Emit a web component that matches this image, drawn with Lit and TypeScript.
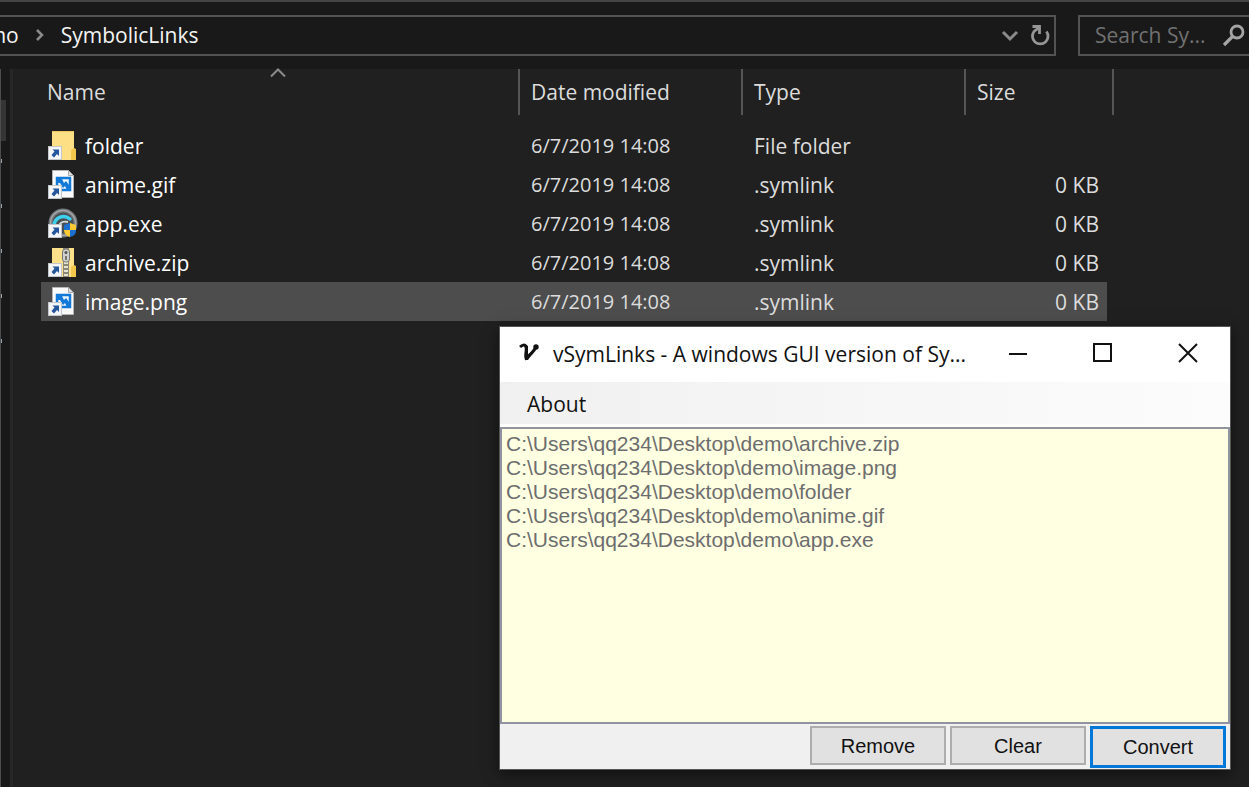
import { LitElement, html, css, svg } from "lit";
import { customElement, property } from "lit/decorators.js";

type Kind = "folder" | "image" | "app" | "zip";

interface Entry {
  name: string;
  kind: Kind;
  date: string;
  type: string;
  size: string;
  selected?: boolean;
}

const ENTRIES: Entry[] = [
  { name: "folder", kind: "folder", date: "6/7/2019 14:08", type: "File folder", size: "" },
  { name: "anime.gif", kind: "image", date: "6/7/2019 14:08", type: ".symlink", size: "0 KB" },
  { name: "app.exe", kind: "app", date: "6/7/2019 14:08", type: ".symlink", size: "0 KB" },
  { name: "archive.zip", kind: "zip", date: "6/7/2019 14:08", type: ".symlink", size: "0 KB" },
  { name: "image.png", kind: "image", date: "6/7/2019 14:08", type: ".symlink", size: "0 KB", selected: true },
];

const PATHS = ["archive.zip", "image.png", "folder", "anime.gif", "app.exe"].map(
  (name) => `C:\\Users\\qq234\\Desktop\\demo\\${name}`,
);

const ART = {
  folder: svg`
    <path d="M4 1h22v29H4z" fill="#fddf85" />
    <path d="M4 1h22v1H4z" fill="#e9c565" />
    <path d="M23 20l3-2 2 1v11h-5z" fill="#f3c74c" />`,
  zip: svg`
    <path d="M4 1h22v29H4z" fill="#fce08a" />
    <path d="M23 20l3-2 2 1v11h-5z" fill="#f3c74c" />
    <rect x="15" y="1" width="6" height="29" fill="#8b8878" />
    <path d="M18 15v15" stroke="#e8e4d2" stroke-width="4" stroke-dasharray="2 2" />
    <rect x="14.500" y="2" width="7" height="13" rx="3" fill="#d0d0d0" stroke="#77776f" />
    <circle cx="18" cy="5.500" r="1.500" fill="#55554f" />
    <path d="M18 9v4" stroke="#77776f" stroke-width="2" />`,
  image: svg`
    <path d="M4.500 1.500h16l5 5v22h-21z" fill="#fafafa" stroke="#b5b5b5" />
    <path d="M20.500 1.500v5h5z" fill="#dedede" stroke="#a9a9a9" />
    <rect x="9" y="9" width="13" height="12" fill="#eef6ff" stroke="#1379d8" stroke-width="2.500" />
    <path d="M10 10h4l2 4 2-2 3 4v5h-2l-2-4-2 2-3-5h-2z" fill="#1379d8" />`,
  app: svg`
    <circle cx="15" cy="15" r="14.500" fill="#73777a" />
    <circle cx="15" cy="15" r="12.500" fill="none" stroke="#a3a6a8" stroke-width="1.500" />
    <circle cx="15" cy="15" r="10.500" fill="#4a4f52" />
    <path d="M6 17C7 9 16 6 22 11" fill="none" stroke="#3fd0ee" stroke-width="3.500" stroke-linecap="round" />
    <path d="M11 18c1-4 5-5 9-4" fill="none" stroke="#d5dcde" stroke-width="2" />
    <path d="M16 17l6-2v7h-6z" fill="#1d6fd0" />
    <path d="M22 15l6 2v5h-6z" fill="#fbc934" />
    <path d="M16 22h6v7c-4-1-6-4-6-7z" fill="#fbc934" />
    <path d="M22 22h6c0 4-2 6-6 7z" fill="#1d6fd0" />`,
};

@customElement("file-icon")
export class FileIcon extends LitElement {
  @property() kind: Kind = "folder";

  static styles = css`
    :host { display: block; flex: none; width: 30px; height: 32px; }
    .art { display: block; }
  `;

  render() {
    return html`<svg class="art" width="30" height="32" viewBox="0 0 30 32" aria-hidden="true">
      ${ART[this.kind]}
      <rect x="0.500" y="16.500" width="13" height="13" fill="#f4f5f7" stroke="#c3c6ca" />
      <path d="M4.500 19.500h6.500v6.500l-2-2-3 3.500-2.500-2.500 3-3.500z" fill="#24569c" />
    </svg>`;
  }
}

@customElement("explorer-pane")
export class ExplorerPane extends LitElement {
  static styles = css`
    :host { display: flex; flex-direction: column; color: #dcdcdc; font: 21px/30px "Open Sans", "Noto Sans", sans-serif; }
    .bar { display: flex; gap: 22px; padding-top: 13px; height: 54px; border-top: 2px solid #444; }
    .address, .search { display: flex; align-items: center; box-sizing: border-box; height: 41px; border: 2px solid #535353; padding-bottom: 2px; }
    .address { flex: 1; min-width: 0; overflow: hidden; border-left: 0; }
    .crumb { color: #f4f4f4; text-decoration: none; }
    .parent { margin-left: -38px; }
    .arrow { margin: 0 16px; }
    .grow { flex: 1; }
    .icon { display: block; flex: none; }
    .tool { display: flex; align-items: center; justify-content: center; width: 32px; height: 36px; padding: 0; border: 0; background: none; }
    .tool:last-child { width: 28px; }
    .search { width: 171px; border-right: 0; padding-left: 15px; }
    .query { flex: 1; min-width: 0; padding: 0; border: 0; outline: 0; background: none; color: #eee; font: inherit; }
    .query::placeholder { color: #717171; opacity: 1; }
    .body { display: flex; flex: 1; }
    .nav { display: flex; flex-direction: column; align-items: flex-start; box-sizing: border-box; width: 13px; border-left: 1px solid #4a4c4e; border-right: 3px solid #272727; }
    .thumb { width: 5px; height: 41px; margin-top: 31px; background: #353535; }
    .pins { display: flex; flex-direction: column; gap: 41px; margin-top: 18px; }
    .pin { width: 1px; height: 4px; background: #9ba2a8; }
    .files { flex: 1; background: #202020; padding-left: 28px; }
    .table { table-layout: fixed; width: 1073px; border-collapse: separate; border-spacing: 0; }
    .name-col { width: 479px; }
    .mid-col { width: 223px; }
    .size-col { width: 148px; }
    .head { position: relative; height: 46px; padding: 0 0 0 11px; text-align: left; font-weight: 400; border-right: 2px solid #555; }
    .head:first-child { padding-left: 6px; }
    .sort { position: absolute; top: -1px; left: 229px; }
    .spacer { height: 11px; padding: 0; }
    .cell { height: 39px; padding: 0 0 0 11px; white-space: nowrap; }
    .cell:first-child { padding-left: 7px; }
    .cell:last-child { padding-right: 8px; text-align: right; border-right: 7px solid transparent; background-clip: padding-box; }
    .date { font-size: 20px; }
    .selected .cell { background-color: #4d4d4d; }
    .label { display: flex; align-items: center; gap: 7px; color: #fff; }
  `;

  render() {
    return html`
      <div class="bar">
        <nav class="address" aria-label="Address">
          <a class="crumb parent" href="#demo">demo</a>
          <svg class="icon arrow" width="10" height="14" viewBox="0 0 10 14"><path d="M2 2l5 5-5 5" fill="none" stroke="#8b8b8b" stroke-width="2.500" /></svg>
          <a class="crumb" href="#links">SymbolicLinks</a>
          <span class="grow"></span>
          <button class="tool" aria-label="History">
            <svg class="icon" width="20" height="14" viewBox="0 0 20 14"><path d="M3 4l7 7 7-7" fill="none" stroke="#8b8b8b" stroke-width="3" /></svg>
          </button>
          <button class="tool" aria-label="Refresh">
            <svg class="icon" width="22" height="24" viewBox="0 0 22 24"><path d="M17.500 8.500A7.800 7.800 0 1 1 5 8.500L9.500 5M3.500 3.500h7v7.500" fill="none" stroke="#969696" stroke-width="2.800" /></svg>
          </button>
        </nav>
        <div class="search">
          <input class="query" aria-label="Search" placeholder="Search Sy..." />
          <svg class="icon" width="28" height="24" viewBox="0 0 28 24"><circle cx="16" cy="9" r="6" fill="none" stroke="#a5a5a5" stroke-width="2.800" /><path d="M12 13l-9 9" stroke="#a5a5a5" stroke-width="3.200" /></svg>
        </div>
      </div>
      <div class="body">
        <div class="nav">
          <div class="thumb"></div>
          <div class="pins">${[1, 2, 3, 4, 5].map(() => html`<div class="pin"></div>`)}</div>
        </div>
        <div class="files">
          <table class="table">
            <colgroup>
              <col class="name-col" /><col class="mid-col" /><col class="mid-col" /><col class="size-col" />
            </colgroup>
            <thead>
              <tr>
                <th class="head">Name
                  <svg class="icon sort" width="16" height="10" viewBox="0 0 16 10"><path d="M1 8.500l7-7 7 7" fill="none" stroke="#8b8b8b" stroke-width="2" /></svg>
                </th>
                <th class="head">Date modified</th>
                <th class="head">Type</th>
                <th class="head">Size</th>
              </tr>
            </thead>
            <tbody>
              <tr><td class="spacer" colspan="4"></td></tr>
              ${ENTRIES.map(
                (e) => html`<tr class=${e.selected ? "selected" : ""}>
                  <td class="cell"><div class="label"><file-icon .kind=${e.kind}></file-icon>${e.name}</div></td>
                  <td class="cell date">${e.date}</td>
                  <td class="cell">${e.type}</td>
                  <td class="cell">${e.size}</td>
                </tr>`,
              )}
            </tbody>
          </table>
        </div>
      </div>
    `;
  }
}

@customElement("symlinks-window")
export class SymlinksWindow extends LitElement {
  static styles = css`
    :host { display: flex; flex-direction: column; box-sizing: border-box; border: 1px solid #555; background: #f0f0f0; color: #111; font: 21px/30px "Open Sans", "Noto Sans", sans-serif; box-shadow: 0 4px 14px rgba(0, 0, 0, 0.5); }
    .title { display: flex; align-items: center; box-sizing: border-box; height: 55px; padding-bottom: 2px; background: #fff; }
    .logo { flex: none; margin: 0 13px 3px 19px; }
    .caption { flex: 1; min-width: 0; margin: 0; font: inherit; white-space: nowrap; }
    .control { display: flex; align-items: center; justify-content: center; width: 85px; height: 52px; padding: 0 0 2px; border: 0; background: none; }
    .menu { display: flex; height: 42px; border-bottom: 3px solid #fff; background: linear-gradient(90deg, #f0f0f0, #fcfcfc); }
    .item { padding: 2px 27px 0; border: 0; background: none; color: inherit; font: inherit; }
    .paths { flex: 1; min-height: 0; box-sizing: border-box; width: 100%; margin: 0; padding: 3px 4px; overflow: hidden; border: 2px solid #8f94a0; border-radius: 0; outline: 0; background: #ffffe1; font: 21px/24px "Liberation Sans", Arial, sans-serif; }
    .path { height: 24px; min-height: 24px; padding: 0; line-height: 24px; color: #6d6d6d; }
    .actions { display: flex; justify-content: flex-end; gap: 4px; height: 43px; padding: 2px 4px 0 0; }
    .action { box-sizing: border-box; width: 136px; height: 39px; padding: 0; border: 2px solid #adadad; background: #e1e1e1; color: #111; font: 20px/30px "Liberation Sans", Arial, sans-serif; }
    .primary { height: 42px; border: 3px solid #0078d7; }
  `;

  render() {
    return html`
      <header class="title">
        <svg class="logo" width="21" height="18" viewBox="0 0 21 18" aria-hidden="true">
          <path d="M1 4C3 2 6 1 7 4S6 12 7 15C11 12 15 8 17 4" fill="none" stroke="#111" stroke-width="3" />
          <path d="M6 1l3 2v9l5-5v3l-5 7H6z" fill="#111" /><circle cx="17" cy="4" r="2.700" fill="#111" />
        </svg>
        <h1 class="caption">vSymLinks - A windows GUI version of Sy...</h1>
        <button class="control" aria-label="Minimize"><svg width="20" height="20"><path d="M1 11h18" stroke="#111" stroke-width="2" /></svg></button>
        <button class="control" aria-label="Maximize"><svg width="20" height="20"><rect x="1" y="1" width="17" height="17" fill="none" stroke="#111" stroke-width="2" /></svg></button>
        <button class="control" aria-label="Close"><svg width="20" height="20"><path d="M1 1l18 18M19 1L1 19" stroke="#111" stroke-width="2" /></svg></button>
      </header>
      <nav class="menu"><button class="item">About</button></nav>
      <select class="paths" multiple size="5" aria-label="Paths">
        ${PATHS.map((p) => html`<option class="path">${p}</option>`)}
      </select>
      <footer class="actions">
        <button class="action">Remove</button>
        <button class="action">Clear</button>
        <button class="action primary">Convert</button>
      </footer>
    `;
  }
}

@customElement("app-root")
export class AppRoot extends LitElement {
  static styles = css`
    :host { display: block; position: relative; min-height: 100vh; overflow: hidden; background: #191919; }
    .explorer { min-height: 100vh; }
    .window { position: absolute; left: 499px; top: 326px; width: 732px; height: 444px; }
  `;

  render() {
    return html`
      <explorer-pane class="explorer"></explorer-pane>
      <symlinks-window class="window"></symlinks-window>
    `;
  }
}
